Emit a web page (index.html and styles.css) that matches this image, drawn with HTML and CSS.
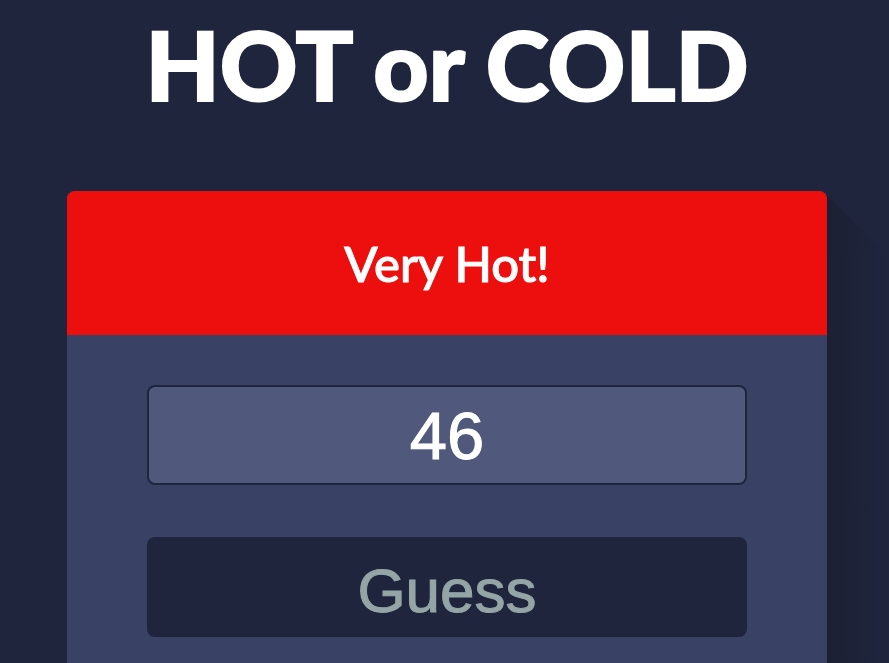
FILE: index.html
```html
<!DOCTYPE html>
<html lang="en">
<head>
<meta charset="utf-8">
<title>HOT or COLD</title>
<link rel="stylesheet" href="styles.css">
</head>
<body>
<h1 class="title">HOT or COLD</h1>
<main class="game">
<h2 class="feedback">Very Hot!</h2>
<form class="guess-form">
<input class="guess-input" type="text" inputmode="numeric" aria-label="Your guess" value="46">
<button class="guess-button" type="button">Guess</button>
</form>
</main>
</body>
</html>
```
FILE: styles.css
```css
* {
  box-sizing: border-box;
}

body {
  margin: 0;
  padding: 0 62px 0 67px;
  background: #1f253d;
  color: #fff;
  font-family: Lato, sans-serif;
  overflow-x: hidden;
}

.title {
  margin: 0;
  padding: 8px 0 71px;
  font-family: "Lato Black", Lato, sans-serif;
  font-size: 96px;
  font-weight: 900;
  line-height: 112px;
  text-align: center;
  white-space: nowrap;
  -webkit-text-stroke: 2px #fff;
}

.game {
  position: relative;
  background: #394264;
  border-radius: 8px 8px 0 0;
}

/* long shadow falling to the right of the card */
.game::after {
  content: "";
  position: absolute;
  top: 4px;
  bottom: 0;
  left: 100%;
  width: 62px;
  background: linear-gradient(to right, #1b2034, #1f253d);
  clip-path: polygon(0 0, 100% 62px, 100% 100%, 0 100%);
}

.feedback {
  margin: 0;
  padding: 42px 0;
  border-radius: 8px 8px 0 0;
  background: #ed0e0e;
  font-family: "Lato Medium", Lato, sans-serif;
  font-size: 49px;
  font-weight: 500;
  line-height: 60px;
  text-align: center;
  -webkit-text-stroke: 1px #fff;
}

.guess-form {
  display: flex;
  flex-direction: column;
  gap: 52px;
  padding: 50px 80px 26px;
}

.guess-input,
.guess-button {
  width: 100%;
  height: 100px;
  border: 2px solid #1f253d;
  border-radius: 8px;
  padding: 0;
  text-align: center;
}

.guess-input {
  background: #50597b;
  color: #fff;
  font-family: "Liberation Sans", Arial, sans-serif;
  font-size: 67px;
  -webkit-text-stroke: 1px #fff;
}

.guess-button {
  padding-top: 6px;
  background: #1f253d;
  color: #95a5a6;
  font-family: "Liberation Sans", Arial, sans-serif;
  font-size: 62px;
  -webkit-text-stroke: 1px #95a5a6;
}
```
